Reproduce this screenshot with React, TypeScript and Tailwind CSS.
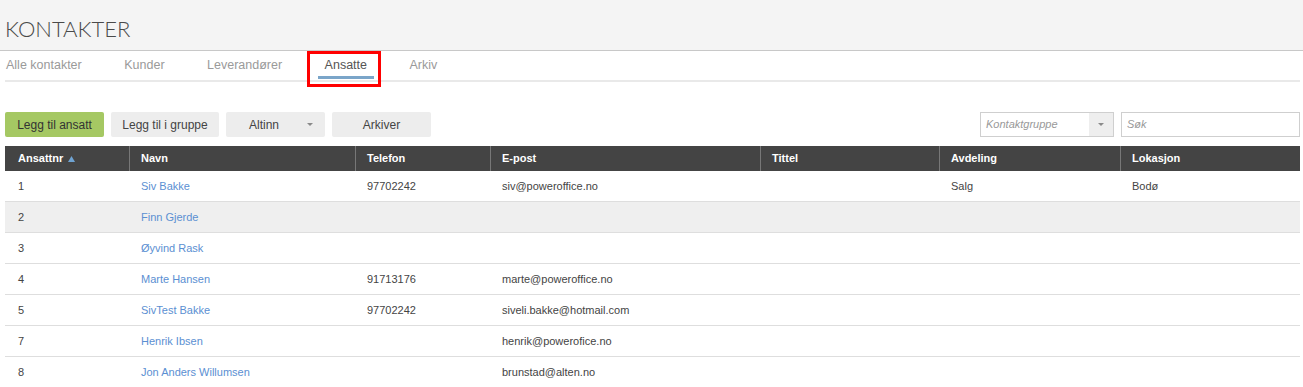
import React from 'react';

const tabs = ['Alle kontakter', 'Kunder', 'Leverandører', 'Ansatte', 'Arkiv'];

const columns = [
  { label: 'Ansattnr', width: 124 },
  { label: 'Navn', width: 226 },
  { label: 'Telefon', width: 135 },
  { label: 'E-post', width: 270 },
  { label: 'Tittel', width: 179 },
  { label: 'Avdeling', width: 181 },
  { label: 'Lokasjon', width: 180 },
];

const rows = [
  { nr: '1', navn: 'Siv Bakke', tlf: '97702242', epost: 'siv@poweroffice.no', tittel: '', avd: 'Salg', lok: 'Bodø' },
  { nr: '2', navn: 'Finn Gjerde', tlf: '', epost: '', tittel: '', avd: '', lok: '' },
  { nr: '3', navn: 'Øyvind Rask', tlf: '', epost: '', tittel: '', avd: '', lok: '' },
  { nr: '4', navn: 'Marte Hansen', tlf: '91713176', epost: 'marte@poweroffice.no', tittel: '', avd: '', lok: '' },
  { nr: '5', navn: 'SivTest Bakke', tlf: '97702242', epost: 'siveli.bakke@hotmail.com', tittel: '', avd: '', lok: '' },
  { nr: '7', navn: 'Henrik Ibsen', tlf: '', epost: 'henrik@powerofice.no', tittel: '', avd: '', lok: '' },
  { nr: '8', navn: 'Jon Anders Willumsen', tlf: '', epost: 'brunstad@alten.no', tittel: '', avd: '', lok: '' },
];

const Caret = () => (
  <svg width="6" height="3" viewBox="0 0 6 3" className="shrink-0">
    <path d="M0 0 L6 0 L3 3 Z" fill="#8a8a8a" />
  </svg>
);

const App = () => {
  return (
    <div className="w-[1303px] h-[387px] bg-white overflow-hidden font-['Liberation_Sans',Arial,sans-serif] text-[#333]">
      {/* page title */}
      <div className="h-[51px] bg-[#f4f4f4] border-b border-[#c8c8c8] pl-[5px] pt-[18px]">
        <h1 className="font-['Lato',sans-serif] font-light text-[22px] leading-none text-[#4a4a4a]">KONTAKTER</h1>
      </div>

      <div className="pl-[5px] pr-[3px]">
        {/* tabs */}
        <div className="flex gap-[28.5px] border-b-2 border-[#e9e9e9] pb-[1px]">
          {tabs.map((tab, i) => (
            <div
              key={tab}
              className={`relative px-[7px] pt-[7px] pb-[3px] text-[12.5px] leading-[15px] border-b-[3px] ${
                i === 0 ? '-ml-[6px]' : ''
              } ${tab === 'Ansatte' ? 'border-[#7aa5c9] text-[#555]' : 'border-transparent text-[#9a9a9a]'}`}
            >
              {tab}
              {tab === 'Ansatte' && (
                <div className="absolute -left-[11px] top-0 w-[74px] h-[36px] border-[3px] border-[#ff0000]" />
              )}
            </div>
          ))}
        </div>

        {/* toolbar */}
        <div className="flex items-center justify-between mt-[30px]">
          <div className="flex gap-[7px] text-[12px]">
            <button className="w-[99px] h-[25px] rounded-[2px] bg-[#a5c863] text-[#333]">Legg til ansatt</button>
            <button className="w-[108px] h-[25px] rounded-[2px] bg-[#ededed] text-[#444]">Legg til i gruppe</button>
            <button className="w-[99px] h-[25px] rounded-[2px] bg-[#ededed] text-[#444] flex items-center pl-[23px] pr-[12px]">
              <span className="flex-1 text-left">Altinn</span>
              <Caret />
            </button>
            <button className="w-[99px] h-[25px] rounded-[2px] bg-[#ededed] text-[#444]">Arkiver</button>
          </div>
          <div className="flex gap-[7px] text-[11px] italic text-[#999]">
            <div className="w-[134px] h-[25px] border border-[#cfcfcf] flex">
              <span className="flex-1 pl-[5px] leading-[23px]">Kontaktgruppe</span>
              <span className="w-[24px] bg-[#eeeeee] flex items-center justify-center">
                <Caret />
              </span>
            </div>
            <div className="w-[179px] h-[25px] border border-[#cfcfcf] pl-[5px] leading-[23px]">Søk</div>
          </div>
        </div>

        {/* table */}
        <table className="mt-[9px] w-[1295px] table-fixed border-separate border-spacing-0 text-[11px]">
          <colgroup>
            {columns.map((c) => (
              <col key={c.label} style={{ width: c.width }} />
            ))}
          </colgroup>
          <thead>
            <tr className="bg-[#444444] h-[25px] text-white">
              {columns.map((c, i) => (
                <th
                  key={c.label}
                  className={`text-left font-bold p-0 ${i === 0 ? 'pl-[13px]' : 'pl-[11px] border-l border-[#777]'}`}
                >
                  {i === 0 ? (
                    <span className="flex items-center gap-[5px]">
                      {c.label}
                      <svg width="7" height="6" viewBox="0 0 7 6">
                        <path d="M3.5 0 L7 6 L0 6 Z" fill="#6fa3d2" />
                      </svg>
                    </span>
                  ) : (
                    c.label
                  )}
                </th>
              ))}
            </tr>
          </thead>
          <tbody>
            {rows.map((r, i) => (
              <tr key={r.nr} className={`h-[31px] ${i === 1 ? 'bg-[#efefef]' : ''}`}>
                <td className="pl-[13px] text-[#444] border-b border-[#dedede]">{r.nr}</td>
                <td className="pl-[12px] text-[#5b8fd2] border-b border-[#dedede]">{r.navn}</td>
                <td className="pl-[12px] text-[#444] border-b border-[#dedede]">{r.tlf}</td>
                <td className="pl-[12px] text-[#444] border-b border-[#dedede]">{r.epost}</td>
                <td className="pl-[12px] text-[#444] border-b border-[#dedede]">{r.tittel}</td>
                <td className="pl-[12px] text-[#444] border-b border-[#dedede]">{r.avd}</td>
                <td className="pl-[12px] text-[#444] border-b border-[#dedede]">{r.lok}</td>
              </tr>
            ))}
          </tbody>
        </table>
      </div>
    </div>
  );
};

export default App;
